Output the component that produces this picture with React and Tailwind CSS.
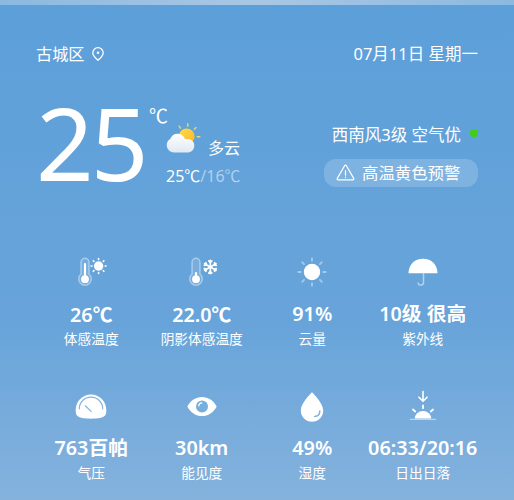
const fontStack = "font-['Noto_Sans','Noto_Sans_CJK_SC',sans-serif]";

const RAYS = [0, 45, 90, 135, 180, 225, 270, 315];

function PinIcon() {
  return (
    <svg width="12" height="15" viewBox="0 0 12 15" fill="none" stroke="white">
      <path d="M6 13.3C3.4 10.8 .8 8.5 .8 5.9a5.2 5.2 0 0 1 10.4 0c0 2.6-2.6 4.9-5.2 7.4z" strokeWidth="1.3" strokeLinejoin="round" />
      <circle cx="6" cy="5.8" r="1.3" fill="white" stroke="none" />
    </svg>
  );
}

function PartlyCloudyIcon() {
  return (
    <svg width="36" height="32" viewBox="0 0 36 32">
      <defs>
        <linearGradient id="sun" x1="0" y1="0" x2="1" y2="1">
          <stop offset="0" stopColor="#ffdc45" />
          <stop offset="1" stopColor="#fdb52d" />
        </linearGradient>
        <linearGradient id="cloud" x1="0" y1="0" x2="0" y2="1">
          <stop offset="0" stopColor="#ffffff" />
          <stop offset="1" stopColor="#dfe9f4" />
        </linearGradient>
      </defs>
      <g stroke="#e3d876" strokeWidth="1.4" strokeLinecap="round">
        <path d="M22.8 1.6v2.6M14.2 4.2l1.2 2M31 5.5l-1.7 1.8M32.2 14.8h2.6" />
      </g>
      <circle cx="21.7" cy="14.3" r="7.9" fill="url(#sun)" />
      <path d="M9.3 30.5a7.4 7.4 0 0 1-7.6-7.3c0-3 1.4-5 3.5-6.2 1.5-3.6 4-5.3 7.2-5.3 3.8 0 6.4 2 7.5 5.4 5.6-.9 9.4 1.8 9.4 6.3 0 4.2-3 7.1-7.3 7.1z" fill="url(#cloud)" />
    </svg>
  );
}

function Thermometer({ level }) {
  return (
    <g>
      <path d="M6 18V6.3a4 4 0 0 1 8 0V18a6.3 6.3 0 1 1-8 0z" fill="white" fillOpacity=".12" stroke="white" strokeOpacity=".4" strokeWidth="1.5" />
      <path d={`M10 ${level}V22`} stroke="white" strokeWidth="2.2" strokeLinecap="round" />
      <circle cx="10" cy="23.2" r="3.9" fill="white" />
    </g>
  );
}

function FeelsLikeIcon() {
  return (
    <svg width="32" height="32" viewBox="0 0 32 32">
      <Thermometer level={8} />
      <circle cx="23.6" cy="10" r="4.7" fill="white" />
      <g stroke="white" strokeWidth="1.6" strokeLinecap="round">
        {RAYS.map((a) => (
          <path key={a} d="M23.6 2.5v.9" transform={`rotate(${a} 23.6 10)`} />
        ))}
      </g>
    </svg>
  );
}

function ShadeIcon() {
  return (
    <svg width="32" height="32" viewBox="0 0 32 32">
      <Thermometer level={17} />
      <g stroke="white" strokeWidth="1.7" strokeLinecap="round" strokeLinejoin="round" fill="none">
        {[0, 60, 120, 180, 240, 300].map((a) => (
          <path key={a} d="M24.3 11V4.4M22.8 5l1.5 1.7L25.8 5" transform={`rotate(${a} 24.3 11)`} />
        ))}
      </g>
    </svg>
  );
}

function SunIcon() {
  return (
    <svg width="32" height="32" viewBox="0 0 32 32">
      <circle cx="16" cy="16" r="8.2" fill="white" />
      <g stroke="white" strokeOpacity=".42" strokeWidth="1.8" strokeLinecap="round">
        {RAYS.map((a) => (
          <path key={a} d="M16 2.2v2.6" transform={`rotate(${a} 16 16)`} />
        ))}
      </g>
    </svg>
  );
}

function UmbrellaIcon() {
  return (
    <svg width="32" height="32" viewBox="0 0 32 32">
      <path d="M16.500 17.500v9.200c0 3-5.300 3-5.300 .3" fill="none" stroke="white" strokeOpacity=".5" strokeWidth="1.5" strokeLinecap="round" />
      <path d="M1.5 17.3C1.5 8.8 7.5 2.8 16 2.8S30.5 8.8 30.5 17.3z" fill="white" />
    </svg>
  );
}

function GaugeIcon() {
  return (
    <svg width="32" height="32" viewBox="0 0 32 32">
      <path d="M16 4.5C7.5 4.5 .7 11.5 .7 20c0 2.8.4 4.5 1.3 5.6C4 27.8 9 28.7 16 28.7s12-.9 14-3.1c.9-1.1 1.3-2.8 1.3-5.6C31.3 11.5 24.5 4.5 16 4.5z" fill="white" />
      <path d="M4.3 18.8a11.7 11.7 0 0 1 23.4 0M10.3 15.8l5.8 5.6" fill="none" stroke="#85b3de" strokeWidth="1.2" strokeLinecap="round" />
    </svg>
  );
}

function EyeIcon() {
  return (
    <svg width="32" height="32" viewBox="0 0 32 32">
      <path d="M1.3 16.5C4.5 10.3 9.8 6.9 16 6.9S27.5 10.3 30.7 16.5C27.5 22.7 22.2 26.1 16 26.1S4.5 22.7 1.3 16.5z" fill="white" />
      <circle cx="16" cy="16.5" r="6" fill="#76aedd" />
      <path d="M12.7 16a3.4 3.4 0 0 1 3.2-3.2" fill="none" stroke="white" strokeWidth="1.2" strokeLinecap="round" />
    </svg>
  );
}

function DropIcon() {
  return (
    <svg width="32" height="32" viewBox="0 0 32 32">
      <path d="M16 2.2C18 4.2 27.2 13.5 27.2 20.5A11.2 11.2 0 0 1 4.8 20.5C4.8 13.5 14 4.2 16 2.2z" fill="white" />
      <path d="M23.8 21c0 3.2-2.2 5.3-5.2 5.5" fill="none" stroke="#85b3de" strokeWidth="1.5" strokeLinecap="round" />
    </svg>
  );
}

function SunsetIcon() {
  return (
    <svg width="32" height="32" viewBox="0 0 32 32" fill="none" stroke="white" strokeLinecap="round" strokeLinejoin="round">
      <path d="M16 1.5v9.5M11.9 7.2l4.1 4.1 4.1-4.1" strokeWidth="1.6" />
      <path d="M16 15.3v2.9M6 19.5l2.2 2M26 19.5l-2.2 2" strokeWidth="1.8" />
      <path d="M7.8 28.6a8.2 7.6 0 0 1 16.4 0z" fill="white" stroke="none" />
      <path d="M3.3 29.3h25.4" strokeOpacity=".5" strokeWidth="1.2" />
    </svg>
  );
}

// the CJK face draws ℃ at full em width and cap height
function Celsius() {
  return <span className="font-['Noto_Sans_CJK_SC',sans-serif]">℃</span>;
}

const stats = [
  { icon: FeelsLikeIcon, value: <>26<Celsius /></>, label: '体感温度' },
  { icon: ShadeIcon, value: <>22.0<Celsius /></>, label: '阴影体感温度' },
  { icon: SunIcon, value: '91%', label: '云量' },
  { icon: UmbrellaIcon, value: '10级 很高', label: '紫外线' },
  { icon: GaugeIcon, value: '763百帕', label: '气压' },
  { icon: EyeIcon, value: '30km', label: '能见度' },
  { icon: DropIcon, value: '49%', label: '湿度' },
  { icon: SunsetIcon, value: '06:33/20:16', label: '日出日落' },
];

function Stat({ icon: Icon, value, label }) {
  return (
    <div className="flex flex-col items-center whitespace-nowrap">
      <Icon />
      <div className="mt-3 h-7 text-[19.8px] leading-7 font-semibold">{value}</div>
      <div className="mt-px h-5 text-[13.7px] leading-5">{label}</div>
    </div>
  );
}

export default function App() {
  return (
    <div className={`h-[500px] w-[514px] overflow-hidden bg-linear-to-b from-[#5c9fd9] from-0% via-[#68a4da] via-65% to-[#84b2dd] text-white ${fontStack}`}>
      <div className="h-[5px] bg-linear-to-r from-[#8bb9e0] via-[#a9c7e5] to-[#8bb9e0]" />

      <header className="mt-[37px] flex h-6 items-center justify-between pr-[36px] pl-[36px] text-[16.5px] leading-6">
        <div className="flex items-center gap-[7px]">
          <span className="text-[16.2px]">古城区</span>
          <PinIcon />
        </div>
        <span>07月11日 星期一</span>
      </header>

      <section className="mt-[33px] flex h-[120px] justify-between pr-[36px] pl-[36px]">
        <div className="flex">
          <div className="h-[96px] w-[113px] text-[101px] leading-[87px] tracking-[-3px]">25</div>
          <div className="pt-[4px] text-[19px] leading-6"><Celsius /></div>
          <div className="-ml-[3px] pt-[23px]">
            <div className="flex items-end gap-[7px]">
              <PartlyCloudyIcon />
              <span className="-mb-1 text-[16px] leading-5">多云</span>
            </div>
            <div className="mt-[11px] pl-px text-[16px] leading-5">
              25<Celsius /><span className="text-white/50">/16<Celsius /></span>
            </div>
          </div>
        </div>

        <div className="flex flex-col items-end pt-[24px]">
          <div className="flex items-center gap-[9px] text-[16.5px] leading-6">
            <span>西南风3级 空气优</span>
            <span className="mb-1 size-2 rounded-full bg-[#3fd00f]" />
          </div>
          <div className="mt-[12px] flex h-[28px] w-[154px] items-center gap-[7px] rounded-xl bg-white/18 pl-[12px] text-[16.4px]">
            <svg width="19" height="18" viewBox="0 0 19 18" fill="none" stroke="white" strokeWidth="1.2" strokeLinecap="round" strokeLinejoin="round">
              <path d="M8.6 1.7 1.3 14.4c-.4.8 0 1.5.9 1.5h14.6c.9 0 1.3-.7.9-1.5L10.4 1.7c-.4-.7-1.4-.7-1.8 0zM9.5 6.5v4.7M9.5 13.2v.2" />
            </svg>
            <span>高温黄色预警</span>
          </div>
        </div>
      </section>

      <main className="mt-[37px] grid grid-cols-4 gap-y-[41px] px-[36px]">
        {stats.map((s) => (
          <Stat key={s.label} {...s} />
        ))}
      </main>
    </div>
  );
}
